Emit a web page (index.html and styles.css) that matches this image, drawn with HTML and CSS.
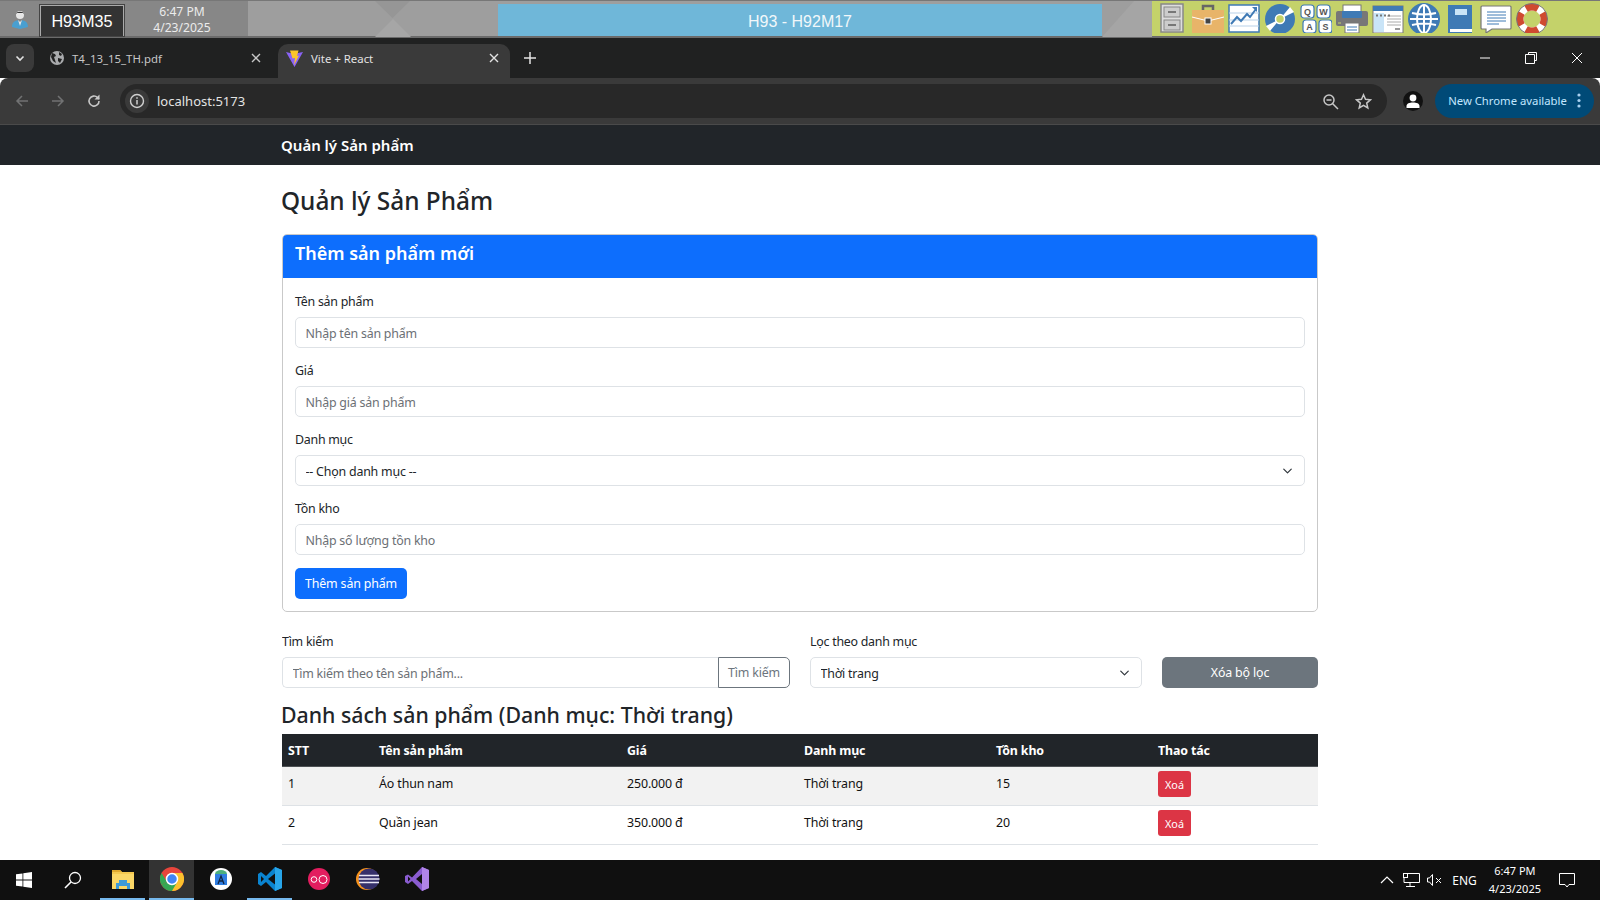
FILE: index.html
```html
<!DOCTYPE html>
<html lang="vi">
<head>
  <meta charset="UTF-8">
  <meta name="viewport" content="width=device-width, initial-scale=1.0">
  <title>Vite + React</title>
  <link rel="stylesheet" href="styles.css">
</head>
<body>
  <div class="kiosk-bar">
    <div class="kiosk-user">
      <svg class="user-icon" width="18" height="20" viewBox="0 0 18 20"><path d="M1 18c0-5 3-6 6-7l2 3 2-3c3 1 6 2 6 7l-8 2z" fill="#4a9fd0"/><path d="M7 11l2 6 2-6-2 2z" fill="#e8e8e8"/><circle cx="9" cy="6" r="4" fill="#e6e6e6"/><path d="M5 5c0-3 8-3 8 0l-1-1H6z" fill="#333"/></svg>
      <div class="kiosk-name">H93M35</div>
      <div class="kiosk-time">6:47 PM<br>4/23/2025</div>
    </div>
    <div class="kiosk-pattern">
      <svg width="250" height="36" viewBox="0 0 250 36"><path d="M127 0h35l-17.500 17z" fill="#969696"/><path d="M127 36l18-18 18 18z" fill="#a6a6a6"/></svg>
    </div>
    <div class="kiosk-title">H93 - H92M17</div>
    <div class="kiosk-pattern kiosk-pattern-sm">
      <svg width="50" height="36" viewBox="0 0 50 36"><path d="M0 36L32 0h18v36z" fill="#a5a5a5"/></svg>
    </div>
    <div class="dock">
      <svg class="dock-icon" viewBox="0 0 32 32"><rect x="5" y="3" width="22" height="28" fill="#ddd" stroke="#888" stroke-width="1.5"/><rect x="8" y="6" width="16" height="10" fill="#ccc" stroke="#888"/><rect x="8" y="19" width="16" height="10" fill="#ccc" stroke="#888"/><rect x="12" y="10" width="8" height="2" fill="#777"/><rect x="12" y="23" width="8" height="2" fill="#777"/></svg>
      <svg class="dock-icon" viewBox="0 0 32 32"><path d="M11 9V5h10v4" fill="none" stroke="#666" stroke-width="2.5"/><rect x="0" y="9" width="32" height="23" fill="#e8b469"/><path d="M0 16l16 4 16-4" fill="none" stroke="#fff"/><rect x="13" y="17" width="6" height="6" fill="#444" stroke="#fff"/></svg>
      <svg class="dock-icon" viewBox="0 0 32 32"><rect x="1" y="4" width="30" height="27" fill="#fff" stroke="#3f7ab5" stroke-width="1.5"/><path d="M1 12h30M1 19h30M1 25h30" stroke="#b9d1e8"/><path d="M3 23l6-7 4 4 6-7 3 3 6-8" fill="none" stroke="#3f7ab5" stroke-width="2"/><path d="M24 6h5v5z" fill="#3f7ab5"/></svg>
      <svg class="dock-icon" viewBox="0 0 32 32"><circle cx="16" cy="18" r="15" fill="#3f7ab5"/><path d="M16 18L26 6l4 5zM16 18L6 30l-4-5z" fill="#fff"/><circle cx="16" cy="18" r="4.5" fill="#c4d26a" stroke="#fff" stroke-width="1.5"/></svg>
      <svg class="dock-icon" viewBox="0 0 32 32"><g fill="#fff" stroke="#3f7ab5" stroke-width="1.2"><rect x="1" y="4" width="13" height="13" rx="3"/><rect x="17" y="4" width="13" height="13" rx="3"/><rect x="3" y="19" width="13" height="13" rx="3"/><rect x="19" y="19" width="13" height="13" rx="3"/></g><g class="key-text"><text x="7.5" y="14" text-anchor="middle">Q</text><text x="23.5" y="14" text-anchor="middle">W</text><text x="9.5" y="29" text-anchor="middle">A</text><text x="25.5" y="29" text-anchor="middle">S</text></g></svg>
      <svg class="dock-icon" viewBox="0 0 32 32"><rect x="7" y="4" width="18" height="10" fill="#fff" stroke="#777"/><rect x="0" y="10" width="32" height="15" rx="2" fill="#777"/><rect x="6" y="10" width="20" height="7" rx="1" fill="#3f7ab5"/><rect x="9" y="22" width="14" height="10" fill="#fff" stroke="#777"/><path d="M11 26h10M11 29h10" stroke="#3f7ab5"/><path d="M2 22h3" stroke="#c4d26a"/></svg>
      <svg class="dock-icon" viewBox="0 0 32 32"><rect x="1" y="5" width="30" height="27" fill="#fff" stroke="#777"/><rect x="1" y="5" width="30" height="5" fill="#3f7ab5"/><rect x="2" y="12" width="10" height="19" fill="#c9e4f7"/><path d="M15 15h14M15 18h14M15 21h14M15 24h14" stroke="#aaa"/><path d="M4 14.500h2M8 14.500h2M12 14.500h2M16 14.500h2" stroke="#777" stroke-width="2"/><rect x="23" y="27" width="5" height="2" fill="#999"/></svg>
      <svg class="dock-icon" viewBox="0 0 32 32"><circle cx="16" cy="18" r="16" fill="#3f7ab5"/><g fill="none" stroke="#fff" stroke-width="2"><ellipse cx="16" cy="18" rx="7" ry="14"/><path d="M16 4v28M4 12q12 3 24 0M4 24q12-3 24 0M2 18h28"/></g></svg>
      <svg class="dock-icon" viewBox="0 0 32 32"><path d="M4 4h24v24H7v3h21v1H4z" fill="#3f7ab5"/><rect x="11" y="8" width="12" height="6" fill="#c9e4f7"/><rect x="6" y="28" width="22" height="3" fill="#fff"/></svg>
      <svg class="dock-icon" viewBox="0 0 32 32"><path d="M2 5h28a1 1 0 0 1 1 1v21a1 1 0 0 1-1 1H12l-6 4v-4H2a1 1 0 0 1-1-1V6a1 1 0 0 1 1-1z" fill="#fff" stroke="#777" stroke-width="1.2"/><path d="M7 11h19M7 14h19M7 17h19M7 20h19M7 23h12" stroke="#3f7ab5"/></svg>
      <svg class="dock-icon" viewBox="0 0 32 32"><circle cx="16" cy="18" r="12" fill="none" stroke="#fff" stroke-width="7"/><g fill="none" stroke="#cf4a30" stroke-width="7"><path d="M10 7.600a12 12 0 0 1 12 0"/><path d="M10 28.400a12 12 0 0 0 12 0"/><path d="M5.600 12a12 12 0 0 0 0 12"/><path d="M26.400 12a12 12 0 0 1 0 12"/></g><circle cx="16" cy="18" r="15.500" fill="none" stroke="#777"/></svg>
    </div>
  </div>

  <div class="tab-strip">
    <button class="tab-search">
      <svg width="12" height="12" viewBox="0 0 12 12"><path d="M2.500 4.500L6 8l3.500-3.500" fill="none" stroke="#e3e3e3" stroke-width="1.600"/></svg>
    </button>
    <div class="tab">
      <svg width="16" height="16" viewBox="0 0 16 16"><circle cx="8" cy="8" r="7" fill="#a9abad"/><path d="M3 3l3 1 1 2-2 1 1 3 1 3-3-2-2-4zM10 2l3 2-1 2-2-1zM9 8l4 1-2 4-2-2z" fill="#202121"/></svg>
      <span class="tab-label">T4_13_15_TH.pdf</span>
      <svg class="tab-close" width="10" height="10" viewBox="0 0 10 10"><path d="M1 1l8 8M9 1l-8 8" stroke="#c7c7c7" stroke-width="1.400"/></svg>
    </div>
    <div class="tab tab-active">
      <svg width="17" height="17" viewBox="0 0 17 17"><path d="M0 2l8.500 15L17 2l-5 1-3.500 1L4 3z" fill="#8a63f5"/><path d="M4 .500h8.500L11 6l2-.500L8 15l1-7-2.500.500z" fill="#fdc52a"/></svg>
      <span class="tab-label">Vite + React</span>
      <svg class="tab-close" width="10" height="10" viewBox="0 0 10 10"><path d="M1 1l8 8M9 1l-8 8" stroke="#e3e3e3" stroke-width="1.400"/></svg>
    </div>
    <svg class="new-tab" width="12" height="12" viewBox="0 0 12 12"><path d="M6 0v12M0 6h12" stroke="#e3e3e3" stroke-width="1.500"/></svg>
    <div class="window-buttons">
      <svg width="12" height="12" viewBox="0 0 12 12"><path d="M1 6h10" stroke="#fff"/></svg>
      <svg width="12" height="12" viewBox="0 0 12 12"><path d="M3.500 2.500V.5h8v8h-2M.5 2.500h9v9h-9z" fill="none" stroke="#fff"/></svg>
      <svg width="12" height="12" viewBox="0 0 12 12"><path d="M1 1l10 10M11 1L1 11" stroke="#fff"/></svg>
    </div>
  </div>

  <div class="toolbar">
    <svg class="nav-icon" width="16" height="16" viewBox="0 0 16 16"><path d="M14 8H3M8 3L3 8l5 5" fill="none" stroke="#717273" stroke-width="1.500"/></svg>
    <svg class="nav-icon" width="16" height="16" viewBox="0 0 16 16"><path d="M2 8h11M8 3l5 5-5 5" fill="none" stroke="#717273" stroke-width="1.500"/></svg>
    <svg class="nav-icon" width="16" height="16" viewBox="0 0 16 16"><path d="M13 8a5 5 0 1 1-1.500-3.500L13 6" fill="none" stroke="#c7c7c7" stroke-width="1.600"/><path d="M13.500 1.500V6.500H8.500z" fill="#c7c7c7"/></svg>
    <div class="omnibox">
      <span class="site-info">
        <svg width="16" height="16" viewBox="0 0 16 16"><circle cx="8" cy="8" r="6.500" fill="none" stroke="#d0d0d0" stroke-width="1.400"/><path d="M8 7v4.500M8 4.200v1.600" stroke="#d0d0d0" stroke-width="1.500"/></svg>
      </span>
      <span class="url">localhost:5173</span>
      <svg class="omni-zoom" width="17" height="17" viewBox="0 0 17 17"><circle cx="7" cy="7" r="5" fill="none" stroke="#c7c7c7" stroke-width="1.500"/><path d="M10.500 10.500L16 16" stroke="#c7c7c7" stroke-width="1.500"/><path d="M4.500 7h5" stroke="#c7c7c7" stroke-width="1.500"/></svg>
      <svg width="17" height="17" viewBox="0 0 17 17"><path d="M8.500 1.800l2 4.500 4.900.5-3.700 3.300 1.100 4.800-4.300-2.500-4.300 2.500 1.100-4.800L1.600 6.800l4.900-.5z" fill="none" stroke="#c7c7c7" stroke-width="1.500"/></svg>
    </div>
    <span class="profile">
      <svg width="14" height="14" viewBox="0 0 14 14"><circle cx="7" cy="4" r="3.400" fill="#fff"/><path d="M.5 14v-2c0-2.500 3-3.500 6.500-3.500s6.500 1 6.500 3.500v2z" fill="#fff"/></svg>
    </span>
    <div class="update-pill">
      <span>New Chrome available</span>
      <svg width="4" height="15" viewBox="0 0 4 15"><circle cx="2" cy="2" r="1.600" fill="#a8d0f0"/><circle cx="2" cy="7.500" r="1.600" fill="#a8d0f0"/><circle cx="2" cy="13" r="1.600" fill="#a8d0f0"/></svg>
    </div>
  </div>

  <nav class="navbar"><a class="navbar-brand">Quản lý Sản phẩm</a></nav>

  <main class="container">
    <h2 class="page-title">Quản lý Sản Phẩm</h2>

    <section class="card">
      <h4 class="card-header">Thêm sản phẩm mới</h4>
      <form class="card-body">
        <div class="field">
          <label>Tên sản phẩm</label>
          <input class="form-control" placeholder="Nhập tên sản phẩm">
        </div>
        <div class="field">
          <label>Giá</label>
          <input class="form-control" placeholder="Nhập giá sản phẩm">
        </div>
        <div class="field">
          <label>Danh mục</label>
          <select class="form-control form-select"><option>-- Chọn danh mục --</option></select>
        </div>
        <div class="field">
          <label>Tồn kho</label>
          <input class="form-control" placeholder="Nhập số lượng tồn kho">
        </div>
        <button class="btn btn-primary" type="button">Thêm sản phẩm</button>
      </form>
    </section>

    <div class="filters">
      <div class="filter-search">
        <label>Tìm kiếm</label>
        <div class="input-group">
          <input class="form-control" placeholder="Tìm kiếm theo tên sản phẩm...">
          <button class="btn btn-outline" type="button">Tìm kiếm</button>
        </div>
      </div>
      <div class="filter-category">
        <label>Lọc theo danh mục</label>
        <select class="form-control form-select"><option>Thời trang</option></select>
      </div>
      <button class="btn btn-secondary" type="button">Xóa bộ lọc</button>
    </div>

    <h3 class="list-title">Danh sách sản phẩm (Danh mục: Thời trang)</h3>
    <table class="product-table">
      <colgroup>
        <col class="col-stt"><col class="col-name"><col class="col-price"><col class="col-cat"><col class="col-stock"><col class="col-action">
      </colgroup>
      <thead>
        <tr><th>STT</th><th>Tên sản phẩm</th><th>Giá</th><th>Danh mục</th><th>Tồn kho</th><th>Thao tác</th></tr>
      </thead>
      <tbody>
        <tr class="row-odd"><td>1</td><td>Áo thun nam</td><td>250.000 đ</td><td>Thời trang</td><td>15</td><td class="cell-action"><button class="btn-delete" type="button">Xoá</button></td></tr>
        <tr><td>2</td><td>Quần jean</td><td>350.000 đ</td><td>Thời trang</td><td>20</td><td class="cell-action"><button class="btn-delete" type="button">Xoá</button></td></tr>
      </tbody>
    </table>
  </main>

  <footer class="taskbar">
    <svg class="start" width="16" height="16" viewBox="0 0 16 16"><path d="M0 2.300l6.500-.9v6.200H0zM7.300 1.300L16 0v7.600H7.300zM0 8.400h6.500v6.200L0 13.700zM7.300 8.400H16V16l-8.700-1.300z" fill="#fff"/></svg>
    <svg class="task-search" width="18" height="18" viewBox="0 0 18 18"><circle cx="11" cy="7" r="5.500" fill="none" stroke="#fff" stroke-width="1.300"/><path d="M7 11l-6 6" stroke="#fff" stroke-width="1.600"/></svg>
    <div class="task-apps">
      <span class="task-app is-open">
        <svg width="22" height="20" viewBox="0 0 22 20"><path d="M0 1h8l2 2h12v17H0z" fill="#f4c84f"/><path d="M0 5h22v15H0z" fill="#fbd767"/><path d="M0 1h8l2 2H0z" fill="#e0a92e"/><path d="M4 14h14v6h-3v-3H7v3H4z" fill="#3d9ad9"/><rect x="7" y="11" width="8" height="3" fill="#3d9ad9"/></svg>
      </span>
      <span class="task-app is-open is-active">
        <svg width="24" height="24" viewBox="0 0 24 24"><circle cx="12" cy="12" r="12" fill="#e8453c"/><path d="M12 12L1.600 18A12 12 0 0 0 12 24l5.500-7z" fill="#34a853"/><path d="M1.600 18A12 12 0 0 1 1.600 6L7 15z" fill="#34a853"/><path d="M12 6h10.400A12 12 0 0 1 12 24l5.200-9z" fill="#fbc02d"/><circle cx="12" cy="12" r="5.500" fill="#4285f4" stroke="#fff" stroke-width="1.500"/></svg>
      </span>
      <span class="task-app">
        <svg width="22" height="22" viewBox="0 0 22 22"><circle cx="11" cy="11" r="11" fill="#fff"/><path d="M5 6h12v11H5z" fill="#2f7de0"/><path d="M5 6a6 4 0 0 1 12 0z" fill="#4caf7d"/><path d="M8 16l3-8 3 8M9.500 13h3" fill="none" stroke="#10233f" stroke-width="1.300"/></svg>
      </span>
      <span class="task-app is-open">
        <svg width="24" height="24" viewBox="0 0 24 24"><path d="M17 0l7 3v18l-7 3-9-9-5 4-3-2v-10l3-2 5 4z" fill="#0a84d0"/><path d="M17 0l7 3v18l-7 3z" fill="#28a6ea"/><path d="M17 6.500L10 12l7 5.500z" fill="#101010"/><path d="M3 9v6l3-3z" fill="#101010"/></svg>
      </span>
      <span class="task-app">
        <svg width="22" height="22" viewBox="0 0 22 22"><circle cx="11" cy="11" r="11" fill="#e31d5f"/><circle cx="6" cy="11.500" r="2.800" fill="none" stroke="#fff"/><circle cx="15" cy="11.500" r="4" fill="none" stroke="#fff"/></svg>
      </span>
      <span class="task-app">
        <svg width="24" height="22" viewBox="0 0 24 22"><circle cx="11" cy="11" r="11" fill="#f7941e"/><circle cx="13" cy="11" r="10.500" fill="#35306a"/><path d="M3 7.500h20M2.500 11h21M3 14.500h20" stroke="#e8e6f5" stroke-width="1.400"/></svg>
      </span>
      <span class="task-app">
        <svg width="24" height="24" viewBox="0 0 24 24"><path d="M17 0l7 3v18l-7 3-10-10-4 3-3-2V9l3-1.500 4 3z" fill="#8a5cd0"/><path d="M17 0l7 3v18l-7 3z" fill="#b184e8"/><path d="M17 7l-6 5 6 5zM3 9.500v5l2.500-2.500z" fill="#101010"/></svg>
      </span>
    </div>
    <div class="tray">
      <svg class="tray-caret" width="14" height="8" viewBox="0 0 14 8"><path d="M1 7l6-6 6 6" fill="none" stroke="#fff" stroke-width="1.200"/></svg>
      <svg class="tray-net" width="17" height="14" viewBox="0 0 17 14"><path d="M4 .5h12.500v9H1V5M7 9.500V13M3 13.500h9" fill="none" stroke="#fff"/><rect x=".5" y=".5" width="4" height="4" fill="none" stroke="#fff"/></svg>
      <svg class="tray-vol" width="16" height="12" viewBox="0 0 16 12"><path d="M.5 4h2l3-3.500v11l-3-3.500h-2zM9 4l5 5M14 4l-5 5" fill="none" stroke="#fff"/></svg>
      <span class="tray-lang">ENG</span>
      <span class="tray-clock">6:47 PM<br>4/23/2025</span>
      <svg class="tray-note" width="16" height="15" viewBox="0 0 16 15"><path d="M.5.500h15v11H10l-2 2.500-2-2.500H.5z" fill="none" stroke="#fff"/></svg>
    </div>
  </footer>
</body>
</html>
```

FILE: styles.css
```css
* {
  box-sizing: border-box;
}

html, body {
  height: 100%;
}

body {
  background: #fff;
  color: #212529;
  display: flex;
  flex-direction: column;
  font-family: "Noto Sans", sans-serif;
  font-size: 13.4px;
  margin: 0;
  overflow: hidden;
}

/* remote desktop bar */
.kiosk-bar {
  background: #9e9e9e;
  border-bottom: 2px solid #6b6b6b;
  border-top: 1px solid #777;
  display: flex;
  flex: none;
  height: 38px;
}

.kiosk-user {
  align-items: stretch;
  background: #878787;
  display: flex;
  padding-left: 11px;
  width: 248px;
}

.user-icon {
  align-self: center;
}

.kiosk-name {
  background: #333;
  border: 1px solid #aaa;
  border-bottom: 0;
  color: #fff;
  font-family: "Liberation Sans", sans-serif;
  font-size: 16.2px;
  line-height: 30px;
  margin: 4px 0 0 11px;
  outline: 1px solid #444;
  text-align: center;
  width: 84px;
}

.kiosk-time {
  color: #ececec;
  flex: 1;
  font-size: 12.1px;
  line-height: 16px;
  padding: 3px 8px 0 0;
  text-align: center;
}

.kiosk-pattern {
  width: 250px;
}

.kiosk-pattern-sm {
  width: 50px;
}

.kiosk-pattern svg {
  display: block;
}

.kiosk-title {
  background: #6fb7d9;
  color: #f2f7fa;
  flex: none;
  font-family: "Liberation Sans", sans-serif;
  font-size: 16px;
  line-height: 35px;
  margin-top: 3px;
  text-align: center;
  width: 604px;
}

.dock {
  align-items: center;
  background: #c4d26a;
  display: flex;
  flex: 1;
  padding: 0 0 3px 2px;
}

.dock-icon {
  height: 32px;
  margin: 0 2px;
  width: 32px;
}

.key-text {
  fill: #555;
  font-family: "Liberation Sans", sans-serif;
  font-size: 9px;
  font-weight: 700;
}

/* chrome */
.tab-strip {
  align-items: flex-end;
  background: #202121;
  display: flex;
  flex: none;
  height: 40px;
  padding-left: 6px;
}

.tab-search {
  align-items: center;
  align-self: center;
  background: #3a3a3a;
  border: 0;
  border-radius: 8px;
  display: flex;
  height: 28px;
  justify-content: center;
  padding: 0;
  width: 28px;
}

.tab {
  align-items: center;
  border-radius: 10px 10px 0 0;
  color: #c7c7c7;
  display: flex;
  font-size: 11.4px;
  gap: 7px;
  height: 34px;
  padding: 0 15px 6px 15px;
  width: 244px;
}

.tab-active {
  background: #3a3a3a;
  color: #e3e3e3;
  gap: 8px;
  padding-left: 8px;
  padding-right: 9px;
  width: 232px;
}

.tab-label {
  flex: 1;
}

.tab-close {
  margin-right: 2px;
}

.new-tab {
  align-self: center;
  margin-left: 14px;
}

.window-buttons {
  align-items: center;
  align-self: center;
  display: flex;
  gap: 34px;
  margin-left: auto;
  padding-right: 17px;
}

.toolbar {
  align-items: center;
  background: #3a3a3a;
  border-bottom: 1px solid #4a4a4a;
  border-radius: 8px 8px 0 0;
  display: flex;
  flex: none;
  height: 47px;
  padding: 0 6px 0 14px;
}

.nav-icon {
  margin-right: 20px;
}

.omnibox {
  align-items: center;
  background: #282828;
  border-radius: 17px;
  display: flex;
  flex: 1;
  height: 34px;
  margin-left: -2px;
  padding: 0 15px 0 5px;
}

.site-info {
  align-items: center;
  background: #3a3a3a;
  border-radius: 50%;
  display: flex;
  height: 24px;
  justify-content: center;
  margin-right: 8px;
  width: 24px;
}

.url {
  color: #e3e3e3;
  flex: 1;
  font-size: 13px;
}

.omni-zoom {
  margin-right: 16px;
}

.profile {
  align-items: center;
  background: #111;
  border-radius: 50%;
  display: flex;
  height: 20px;
  justify-content: center;
  margin: 0 12px 0 16px;
  width: 20px;
}

.update-pill {
  align-items: center;
  background: #004a77;
  border-radius: 17px;
  color: #c2e7ff;
  display: flex;
  font-size: 11.3px;
  gap: 10px;
  height: 34px;
  justify-content: center;
  padding-bottom: 1px;
  width: 159px;
}

/* page */
.navbar {
  align-items: center;
  background: #212529;
  display: flex;
  flex: none;
  height: 40px;
  padding-left: 281px;
}

.navbar-brand {
  color: #fff;
  font-size: 15px;
  font-weight: 600;
}

.container {
  flex: 1;
  margin: 0 auto;
  overflow: hidden;
  padding-top: 18px;
  width: 1036px;
}

.page-title {
  font-size: 24.4px;
  font-weight: 500;
  line-height: 35px;
  margin: 0 0 16px -1px;
}

.card {
  border: 1px solid #c9c9c9;
  border-radius: 5px;
  height: 378px;
  overflow: hidden;
}

.card-header {
  background: #0d6efd;
  color: #fff;
  font-size: 18px;
  font-weight: 600;
  height: 43px;
  line-height: 37px;
  margin: 0;
  padding: 0 12px;
}

.card-body {
  align-items: flex-start;
  display: flex;
  flex-direction: column;
  padding: 12px;
}

.field {
  margin-bottom: 11px;
  width: 100%;
}

label {
  display: block;
  font-size: 12.4px;
  letter-spacing: -.25px;
  line-height: 22px;
  margin-bottom: 4px;
  padding-top: 1px;
}

.form-control {
  background: #fff;
  border: 1px solid #dee2e6;
  border-radius: 5px;
  color: #212529;
  display: block;
  font-family: inherit;
  font-size: 12.4px;
  height: 31px;
  letter-spacing: -.2px;
  padding: 1px 9.5px 0;
  width: 100%;
}

.form-control::placeholder {
  color: #6c7075;
  opacity: 1;
}

.form-select {
  appearance: none;
  background-image: url("data:image/svg+xml,%3csvg xmlns='http://www.w3.org/2000/svg' viewBox='0 0 16 16'%3e%3cpath fill='none' stroke='%23343a40' stroke-linecap='round' stroke-linejoin='round' stroke-width='2' d='m2 5 6 6 6-6'/%3e%3c/svg%3e");
  background-position: right 11px center;
  background-repeat: no-repeat;
  background-size: 11px 10px;
}

.btn {
  border: 1px solid transparent;
  border-radius: 5px;
  font-family: inherit;
  font-size: 12.4px;
  height: 31px;
  letter-spacing: -.15px;
  padding: 0;
  white-space: nowrap;
}

.btn-primary {
  background: #0d6efd;
  color: #fff;
  margin-top: 2px;
  width: 112px;
}

.filters {
  align-items: flex-end;
  display: flex;
  gap: 20px;
  margin-top: 18px;
}

.filter-search {
  width: 508px;
}

.filter-category {
  width: 332px;
}

.input-group {
  display: flex;
}

.input-group .form-control {
  border-radius: 5px 0 0 5px;
  border-right: 0;
}

.btn-outline {
  background: #fff;
  border-color: #6c757d;
  border-radius: 0 5px 5px 0;
  color: #6c757d;
  flex: none;
  width: 72px;
}

.btn-secondary {
  background: #6c757d;
  color: #fff;
  flex: 1;
}

.list-title {
  font-size: 21.3px;
  font-weight: 500;
  line-height: 30px;
  margin: 12px 0 4px -1px;
}

.product-table {
  border-collapse: collapse;
  table-layout: fixed;
  width: 100%;
}

.col-stt { width: 91px; }
.col-name { width: 248px; }
.col-price { width: 177px; }
.col-cat { width: 192px; }
.col-stock { width: 162px; }
.col-action { width: 166px; }

th, td {
  font-size: 12.4px;
  letter-spacing: -.12px;
  line-height: 21px;
  padding: 6px;
  text-align: left;
  vertical-align: top;
}

th {
  background: #212529;
  border-bottom: 1px solid #4d5154;
  color: #fff;
  font-weight: 700;
  padding-bottom: 5px;
}

td {
  border-bottom: 1px solid #dee2e6;
  color: #111;
  height: 39px;
}

.row-odd td {
  background: #f2f2f2;
}

td.cell-action {
  padding-top: 4px;
}

.btn-delete {
  background: #dc3545;
  border: 0;
  border-radius: 3px;
  color: #fff;
  display: block;
  font-family: inherit;
  font-size: 10.8px;
  height: 26px;
  padding: 0;
  width: 33px;
}

/* windows taskbar */
.taskbar {
  align-items: center;
  background: #101010;
  display: flex;
  flex: none;
  height: 40px;
  padding-left: 16px;
}

.task-search {
  margin-left: 32px;
}

.task-apps {
  display: flex;
  height: 100%;
  margin-left: 16px;
}

.task-app {
  align-items: center;
  border-bottom: 2px solid transparent;
  display: flex;
  height: 100%;
  justify-content: center;
  margin: 0 2px;
  width: 45px;
}

.is-open {
  border-bottom-color: #76b9ed;
}

.is-active {
  background: #333;
}

.tray {
  align-items: center;
  color: #fff;
  display: flex;
  font-size: 12px;
  height: 100%;
  margin-left: auto;
  padding-right: 25px;
}

.tray-caret {
  margin-right: 9px;
}

.tray-net {
  margin-right: 7px;
}

.tray-vol {
  margin-right: 9px;
}

.tray-lang {
  margin-right: 12px;
}

.tray-clock {
  font-size: 11px;
  line-height: 18px;
  margin-right: 18px;
  text-align: center;
}
```
